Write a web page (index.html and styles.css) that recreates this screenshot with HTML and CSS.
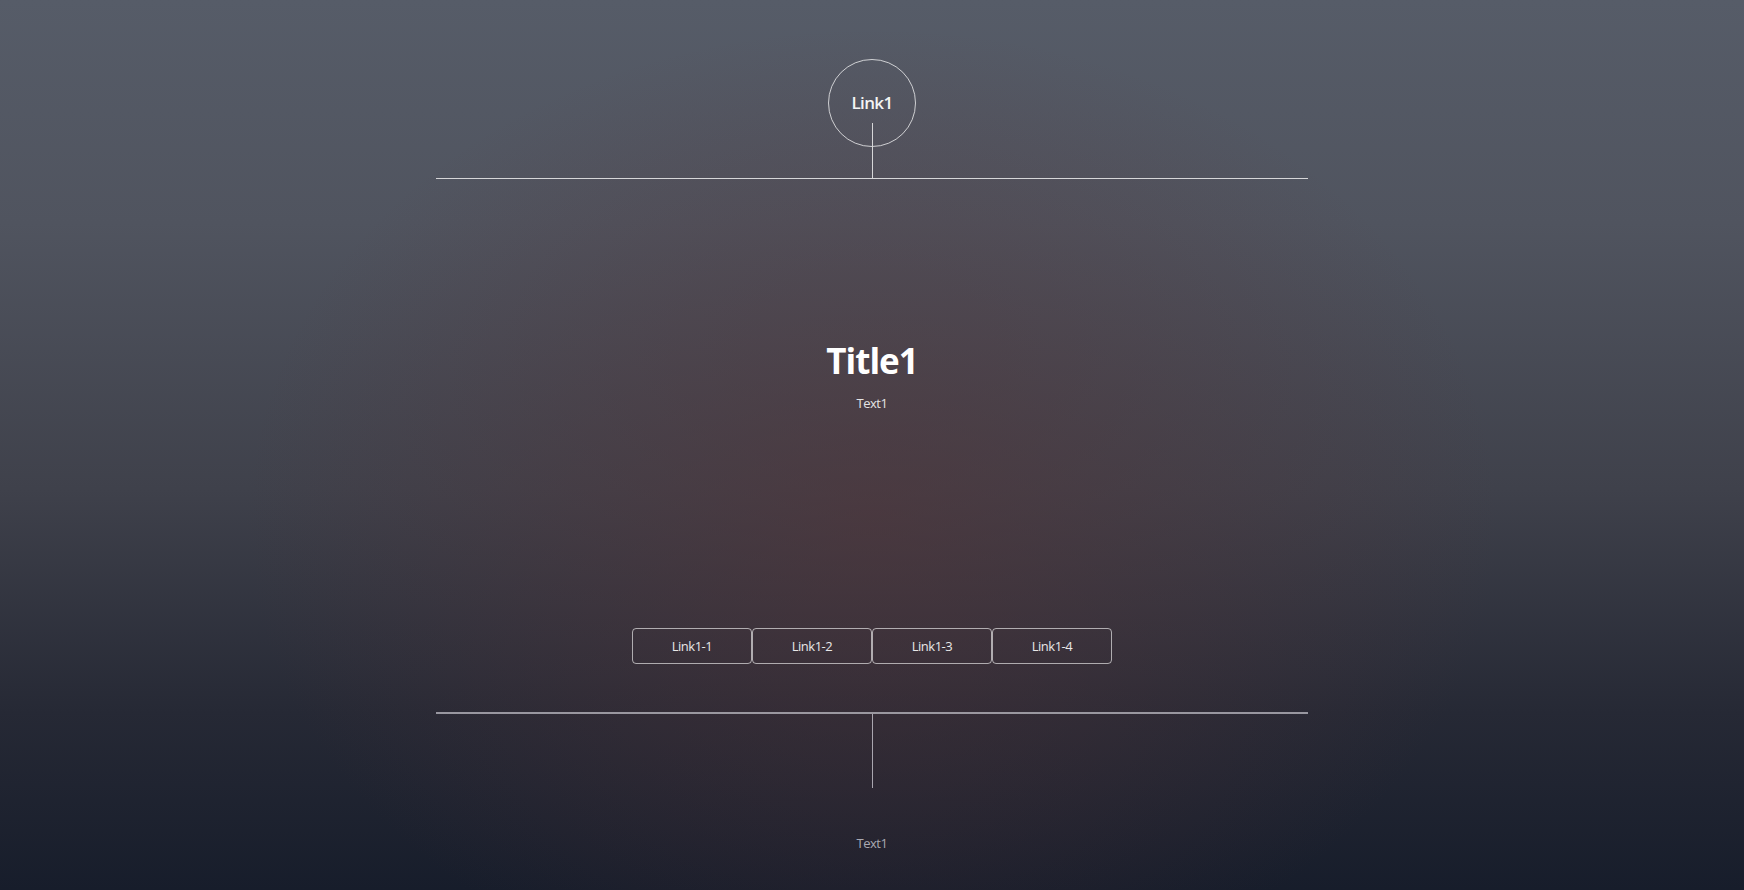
FILE: index.html
```html
<!DOCTYPE html>
<html lang="en">
<head>
<meta charset="utf-8">
<title>Title1</title>
<link rel="stylesheet" href="styles.css">
</head>
<body>
<div class="page">
  <header class="top">
    <a class="circle" href="#">Link1</a>
    <span class="stem stem-top"></span>
  </header>
  <section class="hero">
    <h1 class="title">Title1</h1>
    <p class="lead">Text1</p>
  </section>
  <nav class="links">
    <a class="btn" href="#">Link1-1</a>
    <a class="btn" href="#">Link1-2</a>
    <a class="btn" href="#">Link1-3</a>
    <a class="btn" href="#">Link1-4</a>
  </nav>
  <footer class="bottom">
    <div class="rule"></div>
    <span class="stem stem-bottom"></span>
    <p class="foot-text">Text1</p>
  </footer>
</div>
</body>
</html>
```

FILE: styles.css
```css
html, body {
  margin: 0;
  padding: 0;
  height: 100%;
}
body {
  font-family: "Open Sans", "Noto Sans", sans-serif;
  color: #f2f2f2;
  background-color: #3a3b45;
  background-image:
    radial-gradient(ellipse 36% 55% at 50% 58%, rgba(84, 52, 56, 0.55) 0%, rgba(84, 52, 56, 0.25) 55%, rgba(84, 52, 56, 0) 100%),
    linear-gradient(to bottom, #565c68 0%, #50545f 25%, #3f414b 55%, #262935 80%, #171d2b 100%);
  overflow: hidden;
}
a {
  color: inherit;
  text-decoration: none;
}
.page {
  height: 890px;
  display: flex;
  flex-direction: column;
  align-items: center;
}
.top {
  width: 872px;
  padding-top: 59px;
  border-bottom: 1px solid #d6d6d8;
  display: flex;
  flex-direction: column;
  align-items: center;
}
.circle {
  width: 88px;
  height: 88px;
  box-sizing: border-box;
  border: 1px solid rgba(255, 255, 255, 0.72);
  border-radius: 50%;
  display: flex;
  align-items: center;
  justify-content: center;
  font-size: 17px;
  letter-spacing: -0.6px;
  font-weight: 600;
  color: #f4f4f4;
  padding-bottom: 1px;
}
.stem {
  display: block;
  width: 1px;
  background: #d6d6d8;
}
.stem-top {
  height: 55px;
  margin-top: -24px;
}
.hero {
  margin-top: 160px;
  text-align: center;
}
.title {
  margin: 0;
  font-size: 35px;
  letter-spacing: -1px;
  line-height: 44px;
  font-weight: 700;
  color: #ffffff;
}
.lead {
  margin: 10px 0 0;
  font-size: 13px;
  letter-spacing: -0.5px;
  line-height: 20px;
  color: #e4e4e4;
}
.links {
  margin-top: 215px;
  display: flex;
}
.btn {
  width: 120px;
  height: 36px;
  box-sizing: border-box;
  border: 1px solid rgba(255, 255, 255, 0.6);
  border-radius: 4px;
  display: flex;
  align-items: center;
  justify-content: center;
  font-size: 13px;
  letter-spacing: -0.5px;
  color: #e8e8e8;
}
.bottom {
  width: 872px;
  margin-top: 48px;
  display: flex;
  flex-direction: column;
  align-items: center;
}
.rule {
  width: 100%;
  height: 2px;
  background: rgba(190, 188, 196, 0.75);
}
.stem-bottom {
  height: 74px;
  background: rgba(200, 198, 206, 0.8);
}
.foot-text {
  margin: 45px 0 0;
  font-size: 13px;
  letter-spacing: -0.5px;
  line-height: 20px;
  color: #a9a9b2;
}
```
